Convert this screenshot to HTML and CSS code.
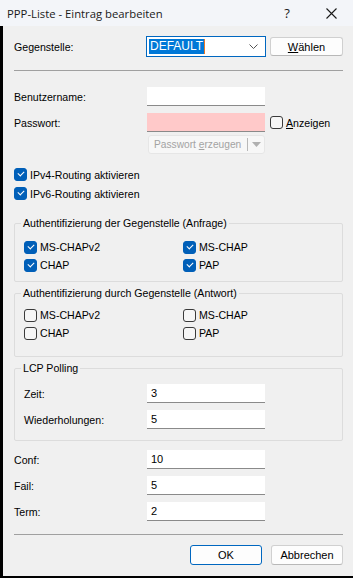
FILE: index.html
```html
<!DOCTYPE html>
<html lang="de">
<head>
    <meta charset="UTF-8">
    <title>PPP-Liste - Eintrag bearbeiten</title>
    <link rel="stylesheet" href="styles.css">
</head>
<body>
<div class="window">
    <!-- Title bar -->
    <div class="titlebar">
        <span class="title">PPP-Liste - Eintrag bearbeiten</span>
        <span class="tb-btn">?</span>
        <span class="tb-btn">
            <svg width="11" height="11" viewBox="0 0 11 11"><path d="M0.5 0.5L10.5 10.5M10.5 0.5L0.5 10.5" stroke="#1a1a1a" stroke-width="1.1" fill="none"/></svg>
        </span>
    </div>

    <div class="client">
        <!-- Gegenstelle -->
        <div class="field head">
            <span class="label">Gegenstelle:</span>
            <div class="combo">
                <span class="sel">DEFAULT</span><span class="cursor"></span>
                <svg class="chev" width="9" height="5" viewBox="0 0 9 5"><path d="M0.5 0.5L4.5 4.5L8.5 0.5" stroke="#555" fill="none"/></svg>
            </div>
            <button class="btn"><u>W</u>ählen</button>
        </div>

        <div class="sep first"></div>

        <div class="field user">
            <span class="label">Benutzername:</span>
            <div class="input"></div>
        </div>
        <div class="field pass">
            <span class="label">Passwort:</span>
            <div class="input pink"></div>
            <label class="check show"><span class="box"></span><span><u>A</u>nzeigen</span></label>
        </div>
        <div class="gen">
            <span class="gen-text">Passwort <u>e</u>rzeugen</span>
            <span class="gen-split"></span>
            <svg width="9" height="5" viewBox="0 0 9 5"><path d="M0 0H9L4.5 5Z" fill="#b0b0b0"/></svg>
        </div>

        <div class="checks">
            <label class="check"><span class="box on"></span>IPv4-Routing aktivieren</label>
            <label class="check"><span class="box on"></span>IPv6-Routing aktivieren</label>
        </div>

        <!-- Authentication groups -->
        <fieldset class="group auth first-group">
            <legend>Authentifizierung der Gegenstelle (Anfrage)</legend>
            <div class="grid">
                <label class="check"><span class="box on"></span>MS-CHAPv2</label>
                <label class="check"><span class="box on"></span>MS-CHAP</label>
                <label class="check"><span class="box on"></span>CHAP</label>
                <label class="check"><span class="box on"></span>PAP</label>
            </div>
        </fieldset>

        <fieldset class="group auth second-group">
            <legend>Authentifizierung durch Gegenstelle (Antwort)</legend>
            <div class="grid">
                <label class="check"><span class="box"></span>MS-CHAPv2</label>
                <label class="check"><span class="box"></span>MS-CHAP</label>
                <label class="check"><span class="box"></span>CHAP</label>
                <label class="check"><span class="box"></span>PAP</label>
            </div>
        </fieldset>

        <fieldset class="group lcp">
            <legend>LCP Polling</legend>
            <div class="field inner">
                <span class="label">Zeit:</span>
                <div class="input">3</div>
            </div>
            <div class="field inner">
                <span class="label">Wiederholungen:</span>
                <div class="input">5</div>
            </div>
        </fieldset>

        <div class="counters">
            <div class="field">
                <span class="label">Conf:</span>
                <div class="input">10</div>
            </div>
            <div class="field">
                <span class="label">Fail:</span>
                <div class="input">5</div>
            </div>
            <div class="field">
                <span class="label">Term:</span>
                <div class="input">2</div>
            </div>
        </div>

        <div class="sep last"></div>

        <div class="actions">
            <button class="btn default">OK</button>
            <button class="btn">Abbrechen</button>
        </div>
    </div>
</div>
</body>
</html>
```

FILE: styles.css
```css
/* Page */
* {
    margin: 0;
    padding: 0;
    box-sizing: border-box;
}

body {
    width: 353px;
    height: 578px;
    background: #f0f0f0;
    font-family: 'Liberation Sans', Arial, sans-serif;
    font-size: 10.6px;
    color: #000;
    overflow: hidden;
}

.window {
    width: 353px;
    height: 578px;
    display: flex;
    flex-direction: column;
}

/* Title bar */
.titlebar {
    height: 26px;
    background: #f3f5f9;
    display: flex;
    align-items: center;
}
.title {
    flex: 1;
    padding-left: 7px;
    font-family: 'Open Sans', 'Noto Sans', sans-serif;
    font-size: 11.3px;
    color: #1a1a1a;
}
.tb-btn {
    width: 44px;
    height: 26px;
    display: flex;
    align-items: center;
    justify-content: center;
    font-family: 'Open Sans', sans-serif;
    font-size: 13px;
    color: #1a1a1a;
}

/* Client area */
.client {
    flex: 1;
    border-left: 3px solid #000;
    border-bottom: 2px solid #000;
    padding: 0 10px 0 11px;
    display: flex;
    flex-direction: column;
}

/* Label + input rows */
.field {
    display: grid;
    grid-template-columns: 133px 118px auto;
    align-items: center;
    height: 19px;
}
.field.head {
    grid-template-columns: 132px 120px 1fr;
    height: 21px;
    margin-top: 10px;
}
.field.head .btn { margin-left: 4px; }
.field.user { margin-top: 16px; }
.field.pass { margin-top: 7px; }
.field.inner { grid-template-columns: 123px 118px; }
.field.inner + .field.inner { margin-top: 7px; }

.input {
    height: 19px;
    background: #fff;
    border-bottom: 1px solid #8a8a8a;
    padding: 3px 0 0 4px;
    line-height: 13px;
    font-size: 11px;
}
.input.pink { background: #ffc9c9; }

/* Combo box */
.combo {
    height: 21px;
    border: 1px solid #0067c0;
    background: #fff;
    display: flex;
    align-items: center;
    padding-left: 2px;
    font-size: 12px;
}
.sel {
    background: #0078d7;
    color: #fff;
    line-height: 15px;
    padding: 0 1px;
}
.cursor {
    width: 1px;
    height: 15px;
    background: #e8782a;
}
.chev { margin-left: auto; margin-right: 7px; }

/* Buttons */
.btn {
    height: 19px;
    background: #fdfdfd;
    border: 1px solid #d0d0d0;
    border-bottom-color: #b8b8b8;
    border-radius: 3px;
    font-family: inherit;
    font-size: 11px;
    color: #000;
}
.btn.default {
    border: 1px solid #0067c0;
}

/* Separators */
.sep {
    height: 1px;
    background: #a0a0a0;
}
.sep.first { margin-top: 13px; }
.sep.last { margin-top: 13px; }

/* Password generator (disabled split button) */
.gen {
    margin: 3px 0 0 134px;
    width: 117px;
    height: 19px;
    background: #f7f7f7;
    border: 1px solid #e6e6e6;
    border-radius: 3px;
    display: flex;
    align-items: center;
    color: #a3a3a3;
    font-size: 10.2px;
    white-space: nowrap;
}
.gen-text { padding-left: 5px; flex: 1; }
.gen-split {
    width: 1px;
    height: 13px;
    background: #b8b8b8;
    margin-right: 4px;
}
.gen svg { margin-right: 3px; }

/* Checkboxes */
.check {
    display: flex;
    align-items: center;
    gap: 3px;
    height: 19px;
}
.box {
    width: 13px;
    height: 13px;
    border: 1px solid #3a3a3a;
    border-radius: 3px;
    background: #f6f6f6;
    position: relative;
}
.box.on {
    background: #005fb8;
    border-color: #005fb8;
}
.box.on::after {
    content: "";
    position: absolute;
    left: 3px;
    top: 2px;
    width: 5px;
    height: 3px;
    border-left: 1px solid #fff;
    border-bottom: 1px solid #fff;
    transform: rotate(-45deg);
}
.check.show { margin-left: 5px; }

.checks { margin-top: 11px; }

/* Group boxes */
.group {
    border: 1px solid #dcdcdc;
    border-radius: 2px;
    padding: 0 9px;
}
.group legend {
    margin-left: -3px;
    padding: 0 2px;
    line-height: 14px;
}
.group.auth .grid {
    display: grid;
    grid-template-columns: 159px 1fr;
}
.group.auth .check { height: 18px; }
.first-group { margin-top: 13px; padding-top: 8px; padding-bottom: 7px; }
.second-group { margin-top: 4px; padding-top: 6px; padding-bottom: 14px; }
.lcp { margin-top: 4px; padding-top: 9px; padding-bottom: 11px; }

/* Counters */
.counters {
    margin-top: 9px;
    display: flex;
    flex-direction: column;
    gap: 7px;
}

/* Dialog buttons */
.actions {
    margin-top: 10px;
    display: flex;
    justify-content: flex-end;
    gap: 9px;
}
.actions .btn {
    width: 72px;
    height: 20px;
}
```
